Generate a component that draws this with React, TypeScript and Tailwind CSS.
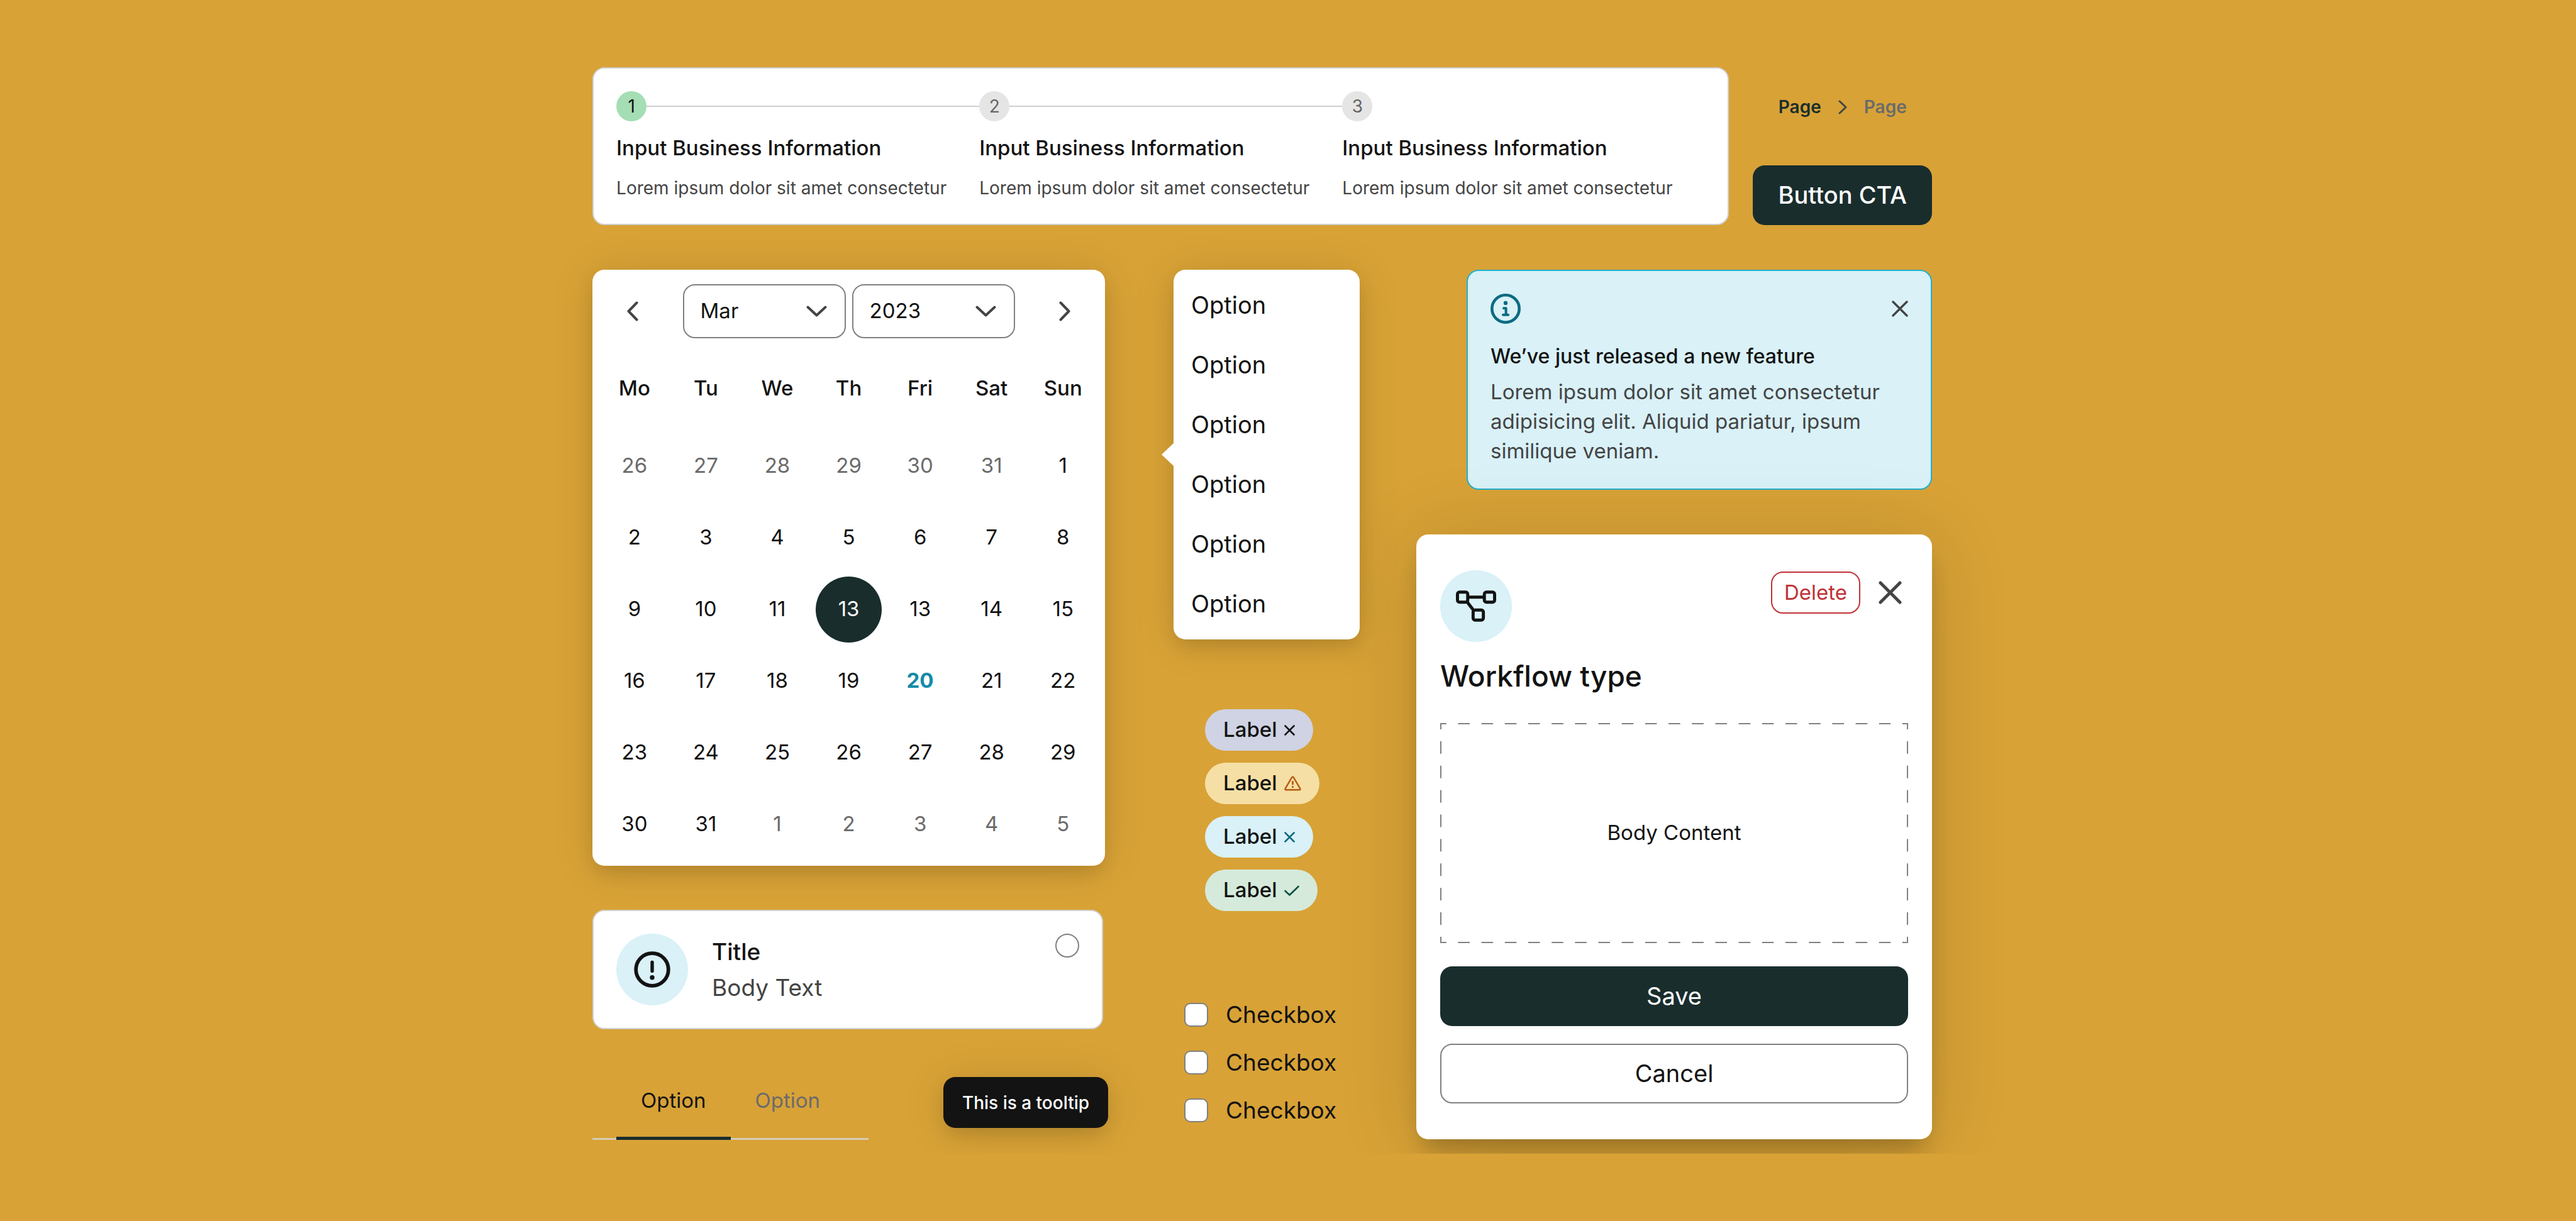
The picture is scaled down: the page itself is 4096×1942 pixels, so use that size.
import type { ReactNode } from "react";

const steps = [1, 2, 3];
const weekdays = ["Mo", "Tu", "We", "Th", "Fri", "Sat", "Sun"];
const weeks = [
  [26, 27, 28, 29, 30, 31, 1],
  [2, 3, 4, 5, 6, 7, 8],
  [9, 10, 11, 13, 13, 14, 15],
  [16, 17, 18, 19, 20, 21, 22],
  [23, 24, 25, 26, 27, 28, 29],
  [30, 31, 1, 2, 3, 4, 5],
];

const raised = "shadow-[0_14px_30px_-4px_rgba(0,0,0,0.13),0_4px_70px_rgba(0,0,0,0.1)]";

type StrokeProps = { d: string; w: number; h: number; stroke: number; className?: string };

function Stroke({ d, w, h, stroke, className = "" }: StrokeProps) {
  return (
    <svg
      width={w}
      height={h}
      viewBox={`0 0 ${w} ${h}`}
      fill="none"
      stroke="currentColor"
      strokeWidth={stroke}
      strokeLinecap="round"
      strokeLinejoin="round"
      aria-hidden="true"
      className={"shrink-0 " + className}
    >
      <path d={d} />
    </svg>
  );
}

function AlertCircleIcon() {
  return (
    <svg width="58" height="58" viewBox="0 0 58 58" fill="none" aria-hidden="true">
      <circle cx="29" cy="29" r="25.8" stroke="currentColor" strokeWidth="5.8" />
      <path d="M29 17.5V31.5" stroke="currentColor" strokeWidth="5.4" strokeLinecap="round" />
      <circle cx="29" cy="41.8" r="3.7" fill="currentColor" />
    </svg>
  );
}

function InfoIcon() {
  return (
    <svg width="48" height="48" viewBox="0 0 48 48" fill="none" stroke="currentColor" aria-hidden="true">
      <circle cx="24" cy="24" r="21.7" strokeWidth="4.6" />
      <circle cx="24" cy="15" r="3.2" fill="currentColor" stroke="none" />
      <path d="M21 23.3h3.6v10.4M20 33.8h8.2" strokeWidth="4" strokeLinecap="round" strokeLinejoin="round" />
    </svg>
  );
}

function WorkflowIcon() {
  return (
    <svg width="64" height="50" viewBox="130 161 220 171" fill="none" stroke="currentColor" strokeWidth="17" aria-hidden="true">
      <rect x="138.500" y="170" width="56" height="55" rx="11" />
      <rect x="285.500" y="170" width="56" height="55" rx="11" />
      <rect x="224" y="268" width="56" height="55" rx="11" />
      <path d="M195 197.500H285M190 222l40 52" />
    </svg>
  );
}

function WarningIcon() {
  return (
    <svg width="27" height="24" viewBox="0 0 27 24" fill="none" stroke="currentColor" strokeWidth="2.400" strokeLinejoin="round" aria-hidden="true">
      <path d="M12.200 2.400 1.600 20.300c-.5.900.1 1.900 1.100 1.900h21.600c1 0 1.600-1 1.100-1.900L14.800 2.400c-.6-1-2-1-2.600 0Z" />
      <path d="M13.500 8.200v6" strokeWidth="2.800" />
      <circle cx="13.500" cy="17.600" r="1.600" fill="currentColor" stroke="none" />
    </svg>
  );
}

function Stepper() {
  return (
    <ol className="flex flex-1 rounded-[19px] border-2 border-[#cfcfcf] bg-white px-[36px] pt-[36px] pb-[38px]">
      {steps.map((n) => (
        <li key={n} className="flex-1">
          <div className="flex items-center">
            <span
              className={
                n === 1
                  ? "flex size-[48px] items-center justify-center rounded-full bg-[#a5deb5] text-[28px] text-[#131313]"
                  : "flex size-[48px] items-center justify-center rounded-full bg-[#e5e5e5] text-[28px] text-[#666666]"
              }
            >
              {n}
            </span>
            {n < 3 && <span className="h-[2px] flex-1 bg-[#cfcfcf]" />}
          </div>
          <h3 className="mt-[18px] text-[33px] leading-[48px] font-medium">Input Business Information</h3>
          <p className="mt-[21px] text-[28px] leading-[38px] text-[#444444]">Lorem ipsum dolor sit amet consectetur</p>
        </li>
      ))}
    </ol>
  );
}

function DateSelect({ label, value }: { label: string; value: string }) {
  return (
    <div className="relative flex w-[259px] items-center">
      <select
        aria-label={label}
        defaultValue={value}
        className="h-[86px] w-full appearance-none rounded-[19px] border-2 border-[#808080] bg-white pl-[26px] text-[33px]"
      >
        <option>{value}</option>
      </select>
      <Stroke d="M2.500 2.500 16.500 15.500 30.500 2.500" w={33} h={18} stroke={4} className="pointer-events-none absolute right-[30px] text-[#444444]" />
    </div>
  );
}

function dayClass(row: number, col: number) {
  if (row === 2 && col === 3) return "mx-auto flex size-[105px] items-center justify-center rounded-full bg-[#192d2d] text-white";
  if (row === 3 && col === 4) return "mx-auto flex size-[105px] items-center justify-center rounded-full font-bold text-[#158aa8]";
  if ((row === 0 && col < 6) || (row === 5 && col > 1))
    return "mx-auto flex size-[105px] items-center justify-center rounded-full text-[#6b6b6b]";
  return "mx-auto flex size-[105px] items-center justify-center rounded-full text-[#131313]";
}

function Calendar() {
  return (
    <section aria-label="Calendar" className={"mr-[5px] rounded-[19px] bg-white px-[10px] pb-[9px] " + raised}>
      <div className="flex items-center justify-between px-[26px] pt-[23px]">
        <button type="button" aria-label="Previous month" className="flex size-[56px] items-center justify-center text-[#444444]">
          <Stroke d="M15.500 2.500 2.500 16 15.500 29.500" w={18} h={32} stroke={4} />
        </button>
        <div className="flex gap-[10px]">
          <DateSelect label="Month" value="Mar" />
          <DateSelect label="Year" value="2023" />
        </div>
        <button type="button" aria-label="Next month" className="flex size-[56px] items-center justify-center text-[#444444]">
          <Stroke d="M2.500 2.500 15.500 16 2.500 29.500" w={18} h={32} stroke={4} />
        </button>
      </div>
      <table className="mt-[14px] w-full table-fixed text-center text-[33px]">
        <thead>
          <tr className="h-[132px]">
            {weekdays.map((d) => (
              <th key={d} scope="col" className="font-medium">
                {d}
              </th>
            ))}
          </tr>
        </thead>
        <tbody>
          {weeks.map((week, row) => (
            <tr key={row} className="h-[114px]">
              {week.map((day, col) => (
                <td key={col}>
                  <button type="button" className={dayClass(row, col)}>
                    {day}
                  </button>
                </td>
              ))}
            </tr>
          ))}
        </tbody>
      </table>
    </section>
  );
}

function TitleCard() {
  return (
    <label className="mt-[70px] mr-[8px] flex items-start rounded-[19px] border-2 border-[#cfcfcf] bg-white p-[36px]">
      <span className="flex size-[114px] items-center justify-center rounded-full bg-[#d9f1f7]">
        <AlertCircleIcon />
      </span>
      <span className="ml-[38px] flex flex-1 flex-col text-[37px] leading-[57px]">
        <span className="font-medium">Title</span>
        <span className="text-[#444444]">Body Text</span>
      </span>
      <input type="radio" name="card" className="size-[38px] appearance-none rounded-full border-2 border-[#808080] bg-white" />
    </label>
  );
}

function TabsAndTooltip() {
  return (
    <div className="mt-[52px] flex justify-between">
      <div role="tablist" className="flex px-[38px] text-[33px] shadow-[inset_0_-3px_#d6ccb5]">
        <button type="button" role="tab" aria-selected="true" className="h-[124px] px-[39px] shadow-[inset_0_-5px_#192d2d]">
          Option
        </button>
        <button type="button" role="tab" aria-selected="false" className="h-[124px] px-[39px] text-[#6b6b6b]">
          Option
        </button>
      </div>
      <div
        role="tooltip"
        className={"mt-[24px] flex h-[81px] items-center rounded-[19px] bg-[#131313] px-[30px] text-[28px] font-medium text-white " + raised}
      >
        This is a tooltip
      </div>
    </div>
  );
}

function OptionMenu() {
  return (
    <div className={"relative rounded-[19px] bg-white py-[9px] " + raised}>
      <svg width="20" height="38" viewBox="0 0 20 38" aria-hidden="true" className="absolute top-1/2 right-full -mt-[19px] -mr-px">
        <path d="M20 0 0 19 20 38Z" fill="white" />
      </svg>
      <ul>
        {[0, 1, 2, 3, 4, 5].map((i) => (
          <li key={i}>
            <button type="button" className="flex h-[95px] w-full items-center pl-[28px] text-[38px]">
              Option
            </button>
          </li>
        ))}
      </ul>
    </div>
  );
}

const cross = "M1.500 1.500 15.500 15.500M15.500 1.500 1.500 15.500";

function Pill({ color, children }: { color: string; children: ReactNode }) {
  return (
    <span className={"flex h-[66px] items-center gap-[11px] rounded-full pr-[29px] pl-[29px] text-[33px] font-medium " + color}>
      Label
      {children}
    </span>
  );
}

function Pills() {
  return (
    <div className="mt-[111px] ml-[50px] flex flex-col items-start gap-[19px]">
      <Pill color="bg-[#cfd3e3]">
        <Stroke d={cross} w={17} h={17} stroke={2.6} />
      </Pill>
      <Pill color="bg-[#f6dfa4]">
        <span className="text-[#b45b10]">
          <WarningIcon />
        </span>
      </Pill>
      <Pill color="bg-[#d9f1f7]">
        <Stroke d={cross} w={17} h={17} stroke={2.6} className="text-[#0f6a80]" />
      </Pill>
      <Pill color="bg-[#d5eadb]">
        <Stroke d="M1.500 9 8.500 15.500 22.500 2" w={24} h={17} stroke={2.6} className="text-[#0b4f45]" />
      </Pill>
    </div>
  );
}

function Checkboxes() {
  return (
    <div className="mt-[146px] ml-[17px] flex flex-col gap-[38px]">
      {[0, 1, 2].map((i) => (
        <label key={i} className="flex h-[38px] items-center gap-[28px] text-[37px]">
          <input type="checkbox" className="size-[38px] appearance-none rounded-[10px] border-2 border-[#808080] bg-white" />
          Checkbox
        </label>
      ))}
    </div>
  );
}

function FeatureAlert() {
  return (
    <section className="ml-[80px] rounded-[19px] border-2 border-[#1fb0cf] bg-[#d9f1f7] p-[36px]">
      <div className="flex items-center justify-between text-[#0d6b82]">
        <InfoIcon />
        <button type="button" aria-label="Dismiss" className="text-[#444444]">
          <Stroke d="M2 2 24 24M24 2 2 24" w={26} h={26} stroke={3.4} />
        </button>
      </div>
      <h3 className="mt-[28px] text-[32px] leading-[48px] font-medium">We’ve just released a new feature</h3>
      <p className="mt-[9px] text-[33px] leading-[47px] text-[#444444]">
        Lorem ipsum dolor sit amet consectetur adipisicing elit. Aliquid pariatur, ipsum similique veniam.
      </p>
    </section>
  );
}

/* Each side is one gradient tile repeated a whole number of times, so dashes always meet at the corners. */
const dashes =
  "[background-image:linear-gradient(90deg,#808080_25%,transparent_25%_75%,#808080_75%),linear-gradient(90deg,#808080_25%,transparent_25%_75%,#808080_75%),linear-gradient(#808080_25%,transparent_25%_75%,#808080_75%),linear-gradient(#808080_25%,transparent_25%_75%,#808080_75%)] [background-size:37px_2px,37px_2px,2px_39px,2px_39px] [background-position:0_0,0_100%,0_0,100%_0] [background-repeat:round_no-repeat,round_no-repeat,no-repeat_round,no-repeat_round]";

function WorkflowModal() {
  return (
    <section className="mt-[71px] flex flex-col rounded-[19px] bg-white px-[38px] py-[57px] shadow-[0_28px_38px_-12px_rgba(0,0,0,0.24),0_8px_130px_rgba(0,0,0,0.14)]">
      <div className="flex items-start justify-between">
        <span className="flex size-[114px] items-center justify-center rounded-full bg-[#d9f1f7]">
          <WorkflowIcon />
        </span>
        <div className="flex h-[71px] items-center gap-[19px]">
          <button type="button" className="h-[67px] rounded-[19px] border-2 border-[#bf3136] px-[19px] text-[33px] text-[#bf3136]">
            Delete
          </button>
          <button type="button" aria-label="Close" className="flex size-[57px] items-center justify-center text-[#444444]">
            <Stroke d="M3 3 34 34M34 3 3 34" w={37} h={37} stroke={5} />
          </button>
        </div>
      </div>
      <h2 className="mt-[25px] text-[46px] leading-[58px] font-medium">Workflow type</h2>
      <div className={"mt-[46px] flex h-[350px] items-center justify-center text-[33px] " + dashes}>Body Content</div>
      <button type="button" className="mt-[37px] h-[95px] rounded-[19px] bg-[#192d2d] text-[38px] text-white">
        Save
      </button>
      <button type="button" className="mt-[28px] h-[95px] rounded-[19px] border-2 border-[#808080] bg-white text-[38px]">
        Cancel
      </button>
    </section>
  );
}

export default function App() {
  return (
    <main className="min-h-screen bg-[#d8a236] font-['Inter',sans-serif] text-[#131313]">
      <div className="overflow-hidden pt-[107px] pr-[25%] pb-[22px] pl-[23%]">
        <div className="flex gap-[38px]">
          <Stepper />
          <div className="flex flex-col justify-between">
            <nav aria-label="Breadcrumb" className="mt-[39px] flex h-[48px] items-center justify-center text-[28px] font-semibold">
              <a href="#page" className="text-[#192d2d]">
                Page
              </a>
              <Stroke d="M2 2 12 11.500 2 21" w={14} h={23} stroke={3} className="mx-[27px] text-[#444444]" />
              <a href="#current" className="text-[#6b6b6b]">
                Page
              </a>
            </nav>
            <button type="button" className="h-[95px] rounded-[19px] bg-[#192d2d] px-[40px] text-[38px] font-medium text-white">
              Button CTA
            </button>
          </div>
        </div>
        <div className="mt-[71px] flex">
          <div className="flex-1">
            <Calendar />
            <TitleCard />
            <TabsAndTooltip />
          </div>
          <div className="mr-[90px] ml-[104px] w-[296px]">
            <OptionMenu />
            <Pills />
            <Checkboxes />
          </div>
          <div className="flex-1">
            <FeatureAlert />
            <WorkflowModal />
          </div>
        </div>
      </div>
    </main>
  );
}
